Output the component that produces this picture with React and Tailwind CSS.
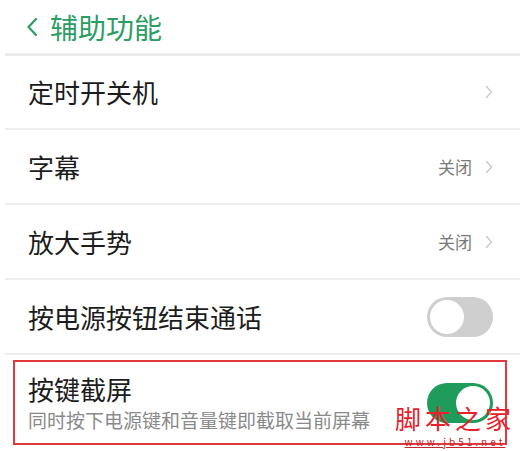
const rows = [
  { label: "定时开关机", value: null },
  { label: "字幕", value: "关闭" },
  { label: "放大手势", value: "关闭" },
];

const Chevron = ({ className = "" }) => (
  <svg width="8" height="14" viewBox="0 0 8 14" className={className} fill="none">
    <path d="M1.5 1.5 L6.5 7 L1.5 12.5" stroke="#c9c9c9" strokeWidth="1.4" strokeLinecap="round" />
  </svg>
);

const Toggle = ({ on }) =>
  on ? (
    <div className="flex h-[40px] w-[66px] items-center justify-end rounded-full bg-[#1f9c5c] px-[3px]">
      <div className="h-[34px] w-[34px] rounded-full bg-white" />
    </div>
  ) : (
    <div className="flex h-[40px] w-[66px] items-center rounded-full bg-[#cfcfcf] px-[3px]">
      <div className="h-[34px] w-[34px] rounded-full bg-white" />
    </div>
  );

export default function App() {
  return (
    <div
      className="relative h-[451px] w-[520px] overflow-hidden bg-white text-[#1c1c1c]"
      style={{ fontFamily: '"Noto Sans CJK SC", "Noto Sans", sans-serif' }}
    >
      <header className="flex h-[53px] items-center gap-[12px] pl-[26px] text-[#2c9d63]">
        <svg width="12" height="20" viewBox="0 0 12 20" fill="none">
          <path d="M10 2 L2.5 10 L10 18" stroke="#2c9d63" strokeWidth="2.2" strokeLinecap="round" strokeLinejoin="round" />
        </svg>
        <h1 className="text-[28px] leading-none">辅助功能</h1>
      </header>
      <div className="ml-[5px] h-[3px] bg-[#ebebeb]" />

      <ul>
        {rows.map((row, i) => (
          <li
            key={i}
            className={`ml-[5px] flex items-center justify-between border-b-2 border-[#eeeeee] pl-[23px] pr-[27px] ${
              i === 0 ? "h-[74px]" : "h-[75px]"
            }`}
          >
            <span className="text-[26px] leading-none">{row.label}</span>
            <span className="flex items-center gap-[13px]">
              {row.value && <span className="text-[17px] text-[#7a7a7a]">{row.value}</span>}
              <Chevron />
            </span>
          </li>
        ))}
        <li className="ml-[5px] flex h-[75px] items-center justify-between border-b-2 border-[#eeeeee] pl-[23px] pr-[27px]">
          <span className="text-[26px] leading-none">按电源按钮结束通话</span>
          <Toggle on={false} />
        </li>
      </ul>

      <div className="mx-[13px] mt-[5px] flex h-[85px] items-center justify-between border-2 border-[#e2393c] pl-[13px] pr-[12px]">
        <div className="flex flex-col gap-[8px]">
          <span className="text-[26px] leading-none">按键截屏</span>
          <span className="text-[19px] leading-none text-[#8a8a8a]">同时按下电源键和音量键即截取当前屏幕</span>
        </div>
        <Toggle on />
      </div>

      <div className="absolute left-[395px] top-[404px] flex flex-col items-center">
        <span
          className="block h-[28px] text-[26px] leading-[28px] tracking-[4px] text-[#e8202a]"
          style={{ fontFamily: '"Noto Sans CJK SC", serif' }}
        >
          脚本之家
        </span>
        <span className="mt-[5px] block h-[10px] text-[10px] leading-[10px] tracking-[3px] text-[#c0282c] underline">
          www.jb51.net
        </span>
      </div>
    </div>
  );
}
